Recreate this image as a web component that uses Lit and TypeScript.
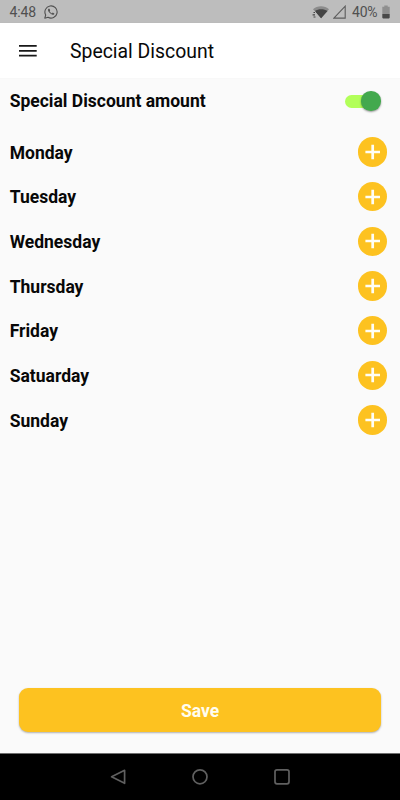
import { LitElement, html, css, svg } from "lit";
import { customElement, state } from "lit/decorators.js";

@customElement("status-bar")
class StatusBar extends LitElement {
  static styles = css`
    :host { display: flex; align-items: center; height: 23px; box-sizing: border-box; padding: 0 10px 0 9.5px; background: #bdbdbd; color: #505050; font-size: 14px; flex: none; }
    svg { display: block; flex: none; }
    .time { width: 34.5px; letter-spacing: -0.1px; white-space: nowrap; }
    .chat { margin-top: 1px; }
    .right { margin-left: auto; display: flex; align-items: center; }
    .signal { margin-left: 3px; }
    .pct { margin-left: 6px; width: 27px; letter-spacing: -0.2px; }
    .battery { margin-left: 3px; }
  `;
  render() {
    return html`
      <span class="time">4:48</span>
      <svg class="chat" width="14" height="14" viewBox="0 0 14 14" fill="none" stroke="#505050" stroke-width="1.1">
        <path d="M.8 13.2l.9-3.2A6.1 6.1 0 1 1 4 12.300z" stroke-linejoin="round" />
        <path d="M4.500 3.800c-.9.8-.5 2.300.8 3.800s3 2.600 4.200 2.100c.7-.3.9-.9.8-1.300L8.700 7.500l-.8.9C6.900 8 6.100 7.200 5.600 6.200l.6-.8-.7-1.600z" fill="#505050" stroke="none" />
      </svg>
      <div class="right">
        <svg width="18" height="14" viewBox="0 0 18 14">
          <path d="M1 4.200C4.800.3 13.200.3 17 4.200L9.200 13z" fill="#8c8c8c" />
          <path d="M2.900 6.100C6.300 3.500 12 3.500 15.500 6.100L9.200 13.200z" fill="#444" />
          <path d="M0 6.500h3.600L7 13.500H0z" fill="#bdbdbd" />
          <path d="M3.300 6.200L9.200 13.200V6z" fill="#444" />
          <path d="M1.500 7.500h1.500M.6 9.800h2.400M1.500 12h2" stroke="#444" stroke-width="1.200" />
        </svg>
        <svg class="signal" width="13" height="14" viewBox="0 0 13 14">
          <path d="M.9 13.100H12.200V1.200z" fill="none" stroke="#5c5c5c" stroke-width="1.100" />
        </svg>
        <span class="pct">40%</span>
        <svg class="battery" width="8" height="14" viewBox="0 0 8 14">
          <path d="M2.300.5h3.400v1.300H7.700V9H.3V1.800h2z" fill="#8f8f8f" />
          <path d="M.3 9h7.400v3.600q0 .8-.8.8H1.100q-.8 0-.8-.8z" fill="#484848" />
        </svg>
      </div>
    `;
  }
}

@customElement("nav-bar")
class NavBar extends LitElement {
  static styles = css`
    :host { display: grid; grid-template-columns: repeat(3, 82px); justify-content: center; place-items: center; height: 47px; box-sizing: border-box; border-top: 1px solid #6e6e6e; background: #000; flex: none; }
  `;
  private icon(shape: unknown) {
    return html`<svg width="18" height="18" viewBox="0 0 18 18" fill="none" stroke="#606060" stroke-width="1.700">${shape}</svg>`;
  }
  render() {
    return html`
      ${this.icon(svg`<path d="M2.600 8.800L15.600 2.300V15.300z" stroke-linejoin="round" />`)}
      ${this.icon(svg`<circle cx="9" cy="8.800" r="7" />`)}
      ${this.icon(svg`<rect x="2" y="1.800" width="14" height="14" rx="2" />`)}
    `;
  }
}

@customElement("app-root")
class AppRoot extends LitElement {
  static styles = css`
    :host { display: flex; flex-direction: column; height: 100vh; overflow: hidden; background: #fafafa; color: #080808; font-family: Roboto, "Noto Sans", sans-serif; }
    svg { display: block; flex: none; }
    button { font: inherit; border: 0; padding: 0; cursor: pointer; }
    header { display: flex; align-items: center; height: 55px; box-sizing: border-box; padding: 0 18.500px; gap: 33.500px; background: #fff; flex: none; box-shadow: 0 0 1px rgba(0, 0, 0, 0.06); }
    h1 { margin: 0; font-size: 19.400px; font-weight: 400; line-height: 24px; white-space: nowrap; padding-top: 3px; }
    .menu { background: none; }
    main { flex: 1; display: flex; flex-direction: column; font-size: 17.500px; font-weight: 700; }
    .row { display: flex; align-items: center; justify-content: space-between; height: 44.700px; padding: 0 12.800px 0 9.700px; white-space: nowrap; }
    .row > span { padding-top: 1.500px; }
    .amount { height: 46px; margin-bottom: 5.600px; padding-right: 19.500px; }
    .amount > span { padding-top: 0; }
    .switch { position: relative; display: block; width: 36px; height: 14px; background: none; }
    .track { display: block; width: 29px; height: 13px; border-radius: 7px; background: #b2ff59; }
    .thumb { position: absolute; right: 0; top: -3px; width: 19.500px; height: 19.500px; border-radius: 50%; background: #43a94d; box-shadow: 0 1px 2px rgba(0, 0, 0, 0.4); }
    .off .thumb { right: 16px; background: #fafafa; }
    .add { display: grid; place-items: center; width: 29.200px; height: 29.200px; border-radius: 50%; background: #fdc220; }
    .save { margin: auto 19.300px 20.900px; height: 44px; padding-top: 1px; border-radius: 9px; background: #fdc220; color: #fffdf0; font-size: 17.500px; font-weight: 700; box-shadow: 0 1px 2px rgba(0, 0, 0, 0.3); }
  `;
  @state() private enabled = true;
  private days = ["Monday", "Tuesday", "Wednesday", "Thursday", "Friday", "Satuarday", "Sunday"];

  render() {
    return html`
      <status-bar></status-bar>
      <header>
        <button class="menu" aria-label="Menu">
          <svg width="18" height="12" viewBox="0 0 18 12">
            <path d="M0 .9h17.700M0 5.800h17.700M0 10.700h17.700" stroke="#181818" stroke-width="1.800" />
          </svg>
        </button>
        <h1>Special Discount</h1>
      </header>
      <main>
        <div class="row amount">
          <span>Special Discount amount</span>
          <button class="switch ${this.enabled ? "" : "off"}" aria-label="Special Discount amount" @click=${() => (this.enabled = !this.enabled)}>
            <span class="track"></span><span class="thumb"></span>
          </button>
        </div>
        ${this.days.map(
          (day) => html`<div class="row">
            <span>${day}</span>
            <button class="add" aria-label="Add ${day}">
              <svg width="16" height="16" viewBox="0 0 16 16">
                <path d="M.4 8h14.600M7.700 .7v14.600" stroke="#fffef5" stroke-width="2.700" />
              </svg>
            </button>
          </div>`
        )}
        <button class="save">Save</button>
      </main>
      <nav-bar></nav-bar>
    `;
  }
}
